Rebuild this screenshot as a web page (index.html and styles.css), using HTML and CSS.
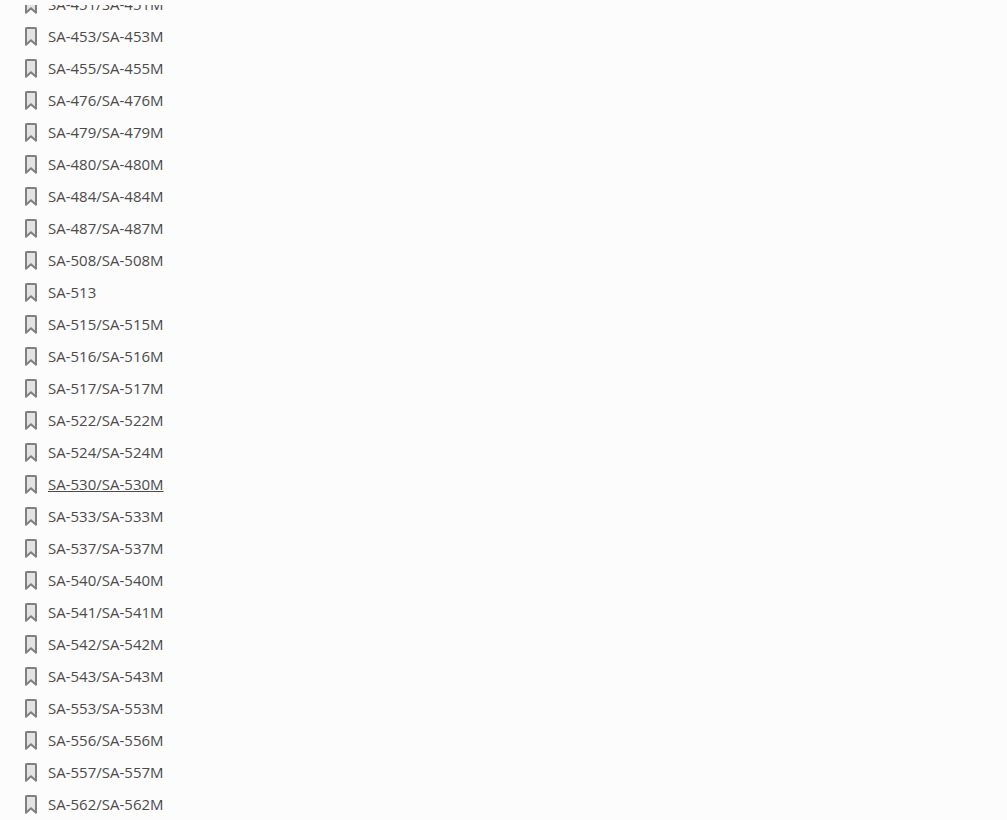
FILE: index.html
```html
<!DOCTYPE html>
<html lang="en">
<head>
    <meta charset="UTF-8">
    <meta name="viewport" content="width=device-width, initial-scale=1.0">
    <title>Bookmarks</title>
    <link rel="stylesheet" href="styles.css">
</head>
<body>
    <nav class="bookmarks" aria-label="Bookmarks">
        <ul class="bookmark-list" id="bookmark-list"></ul>
    </nav>
    <script>
        const bookmarks = [
            'SA-451/SA-451M',
            'SA-453/SA-453M',
            'SA-455/SA-455M',
            'SA-476/SA-476M',
            'SA-479/SA-479M',
            'SA-480/SA-480M',
            'SA-484/SA-484M',
            'SA-487/SA-487M',
            'SA-508/SA-508M',
            'SA-513',
            'SA-515/SA-515M',
            'SA-516/SA-516M',
            'SA-517/SA-517M',
            'SA-522/SA-522M',
            'SA-524/SA-524M',
            'SA-530/SA-530M',
            'SA-533/SA-533M',
            'SA-537/SA-537M',
            'SA-540/SA-540M',
            'SA-541/SA-541M',
            'SA-542/SA-542M',
            'SA-543/SA-543M',
            'SA-553/SA-553M',
            'SA-556/SA-556M',
            'SA-557/SA-557M',
            'SA-562/SA-562M'
        ];
        const activeBookmark = 'SA-530/SA-530M';
        const list = document.getElementById('bookmark-list');

        bookmarks.forEach(name => {
            const item = document.createElement('li');
            item.classList.add('bookmark');
            item.innerHTML = `
                <svg class="bookmark-icon" viewBox="0 0 12 19" aria-hidden="true">
                    <path d="M1 1.5 Q1 1 1.5 1 H10.5 Q11 1 11 1.5 V17.8 L6 13.2 L1 17.8 Z"/>
                </svg>
                <a href="#" class="bookmark-link${name === activeBookmark ? ' active' : ''}">${name}</a>
            `;
            list.appendChild(item);
        });
    </script>
</body>
</html>
```
FILE: styles.css
```css
body {
    font-family: "Segoe UI", "Open Sans", "Noto Sans", sans-serif;
    font-size: 15px;
    margin: 0;
    padding-top: 5px;
    height: 100vh;
    box-sizing: border-box;
    background-color: #fcfcfc;
    color: #4b4b4b;
}
.bookmarks {
    height: 100%;
    overflow: hidden;
}
/* the first row is scrolled halfway out of the panel */
.bookmark-list {
    list-style: none;
    margin: -17px 0 0;
    padding: 0 25px;
}
.bookmark {
    display: flex;
    align-items: center;
    gap: 11px;
    height: 32px;
}
.bookmark-icon {
    width: 12px;
    height: 19px;
    fill: #e3e3e3;
    stroke: #808080;
    stroke-width: 2;
    stroke-linejoin: round;
}
.bookmark-link {
    color: inherit;
    line-height: 20px;
    text-decoration: none;
}
.bookmark-link:hover, .bookmark-link.active {
    text-decoration: underline;
}
```
